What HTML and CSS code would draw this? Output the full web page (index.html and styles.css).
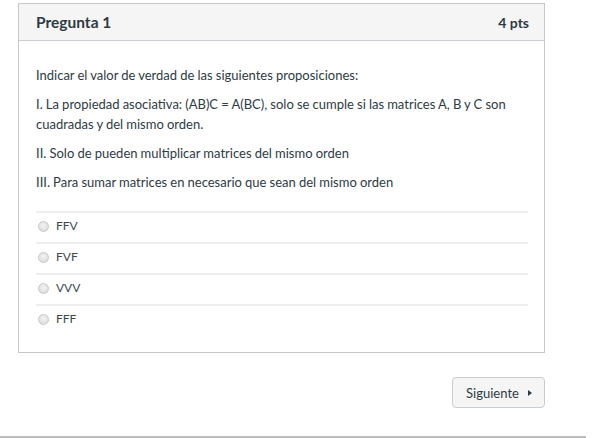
FILE: index.html
```html
<!DOCTYPE html>
<html>
<head>
<meta charset="utf-8">
<link rel="stylesheet" href="styles.css">
</head>
<body>
<div class="page">
  <div class="card">
    <div class="card-header">
      <span class="title">Pregunta 1</span>
      <span class="pts">4 pts</span>
    </div>
    <div class="card-body">
      <p>Indicar el valor de verdad de las siguientes proposiciones:</p>
      <p>I. La propiedad asociativa: (AB)C = A(BC), solo se cumple si las matrices A, B y C son cuadradas y del mismo orden.</p>
      <p>II. Solo de pueden multiplicar matrices del mismo orden</p>
      <p>III. Para sumar matrices en necesario que sean del mismo orden</p>
      <div class="answers">
        <div class="answer"><span class="radio"></span><span class="label">FFV</span></div>
        <div class="answer"><span class="radio"></span><span class="label">FVF</span></div>
        <div class="answer"><span class="radio"></span><span class="label">VVV</span></div>
        <div class="answer"><span class="radio"></span><span class="label">FFF</span></div>
      </div>
    </div>
  </div>
  <div class="actions">
    <button class="btn">Siguiente <span class="caret"></span></button>
  </div>
  <div class="footer-box"></div>
</div>
</body>
</html>
```

FILE: styles.css
```css
* { box-sizing: border-box; }
html, body { margin: 0; padding: 0; background: #fff; }
body { font-family: Lato, "Open Sans", sans-serif; color: #2d3b45; }
.page { padding-top: 3px; width: 600px; height: 438px; overflow: hidden; }
.card {
  margin-left: 18px;
  width: 527px;
  border: 1px solid #c4c8cb;
}
.card-header {
  display: flex;
  justify-content: space-between;
  align-items: center;
  height: 37px;
  padding: 0 15px 0 17px;
  background: #f5f5f5;
  border-bottom: 1px solid #c7cdd1;
}
.title { font-weight: 700; font-size: 15.5px; color: #2d3b45; }
.pts { font-weight: 700; font-size: 14px; color: #2d3b45; }
.card-body { padding: 24px 16px 17px 17px; font-size: 13px; line-height: 20px; }
.card-body p { margin: 0 0 9px 0; word-spacing: -0.2px; }
.answers { margin-top: 19px; }
.answer {
  display: flex;
  align-items: center;
  height: 31px;
  border-top: 2px solid #eeeeee;
  padding-left: 2px;
  padding-bottom: 3px;
}
.radio {
  width: 11px; height: 11px; border-radius: 50%;
  border: 1px solid #c8c8c8;
  background: radial-gradient(circle at 50% 40%, #f2f2f2 0%, #d8d8d8 100%);
  margin-right: 7px;
}
.label { font-size: 12px; color: #3c4650; font-family: Lato, sans-serif; }
.actions { display: flex; justify-content: flex-end; width: 545px; margin-top: 24px; }
.btn {
  font-family: Lato, sans-serif;
  font-size: 13px;
  color: #2d3b45;
  background: #f5f5f5;
  border: 1px solid #c7cdd1;
  border-radius: 4px;
  height: 31px;
  width: 93px;
  padding: 0 0 0 1px;
  display: flex; align-items: center; justify-content: center;
}
.caret {
  display: inline-block; width: 0; height: 0;
  border-top: 3px solid transparent; border-bottom: 3px solid transparent;
  border-left: 4px solid #2d3b45;
  margin-left: 9px;
}
.footer-box {
  margin-top: 28px;
  width: 586px;
  height: 10px;
  border-top: 2px solid #bdbdbd;
  border-right: 1px solid #bdbdbd;
}
```
